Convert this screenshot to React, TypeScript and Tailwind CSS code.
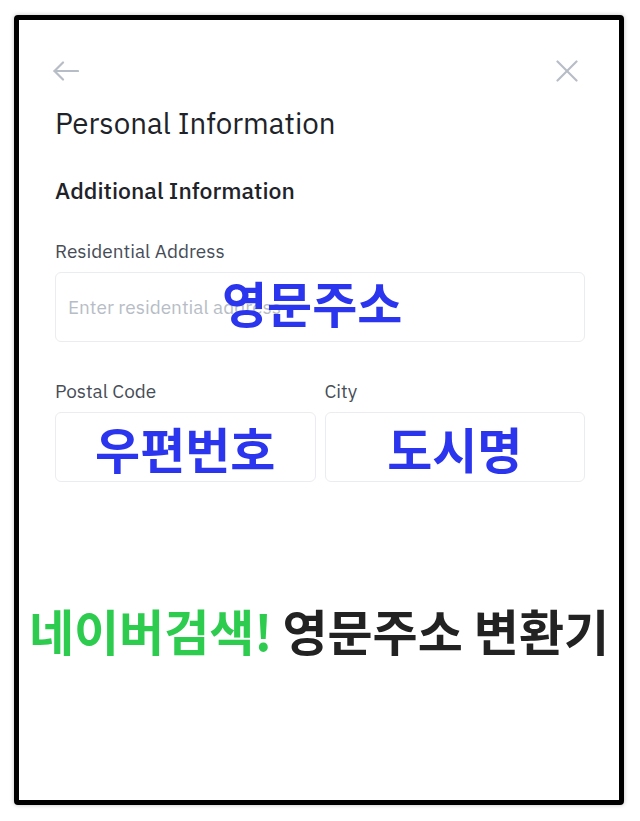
import React from "react";

const sans = { fontFamily: '"IBM Plex Sans", Inter, "Noto Sans", sans-serif' };
const kr = { fontFamily: '"Noto Sans CJK KR", "Noto Sans", sans-serif' };

function ArrowLeft() {
  return (
    <svg width="26" height="22" viewBox="0 0 26 22" fill="none" stroke="#b7bdc6" strokeWidth="2.2" strokeLinecap="round" strokeLinejoin="round">
      <path d="M25 11H1.5" />
      <path d="M10 2.5L1.5 11l8.5 8.5" />
    </svg>
  );
}

function Close() {
  return (
    <svg width="22" height="22" viewBox="0 0 22 22" fill="none" stroke="#b7bdc6" strokeWidth="2.2" strokeLinecap="round">
      <path d="M1.5 1.5l19 19" />
      <path d="M20.5 1.5l-19 19" />
    </svg>
  );
}

export default function App() {
  return (
    <div className="w-[640px] h-[821px] bg-white overflow-hidden pt-[15px] pl-[14px]">
      <div className="w-[610px] h-[790px] border-[5px] border-black rounded-[4px] bg-white shadow-[0_0_4px_rgba(0,0,0,0.25)] flex flex-col">
        <div className="pl-[36px] pr-[34px] pt-[40px] flex flex-col" style={sans}>
          <div className="flex items-center justify-between h-[22px]">
            <div className="-ml-[2px]"><ArrowLeft /></div>
            <div className="mr-[7px]"><Close /></div>
          </div>
          <div className="mt-[23px] text-[29.5px] leading-[36px] text-[#1e2329]">Personal Information</div>
          <div className="mt-[34px] text-[23px] leading-[30px] font-medium text-[#1e2329]">Additional Information</div>
          <div className="mt-[33px] text-[19px] leading-[26px] text-[#474d57]">Residential Address</div>
          <div className="relative mt-[8px] h-[70px] border border-[#eaecef] rounded-[6px] flex items-center px-[12px]">
            <span className="text-[19px] text-[#b7bdc6]">Enter residential address</span>
            <span className="absolute left-[166px] top-[1px] text-[49px] leading-[56px] font-bold text-[#2b35ee]" style={kr}>영문주소</span>
          </div>
          <div className="mt-[36px] grid grid-cols-2 gap-[9px]">
            <div className="flex flex-col">
              <div className="text-[19px] leading-[26px] text-[#474d57]">Postal Code</div>
              <div className="mt-[8px] h-[70px] border border-[#eaecef] rounded-[6px] flex items-center justify-center">
                <span className="text-[49px] leading-[56px] font-bold text-[#2b35ee] mt-[1px]" style={kr}>우편번호</span>
              </div>
            </div>
            <div className="flex flex-col">
              <div className="text-[19px] leading-[26px] text-[#474d57]">City</div>
              <div className="mt-[8px] h-[70px] border border-[#eaecef] rounded-[6px] flex items-center justify-center">
                <span className="text-[49px] leading-[56px] font-bold text-[#2b35ee] mt-[1px]" style={kr}>도시명</span>
              </div>
            </div>
          </div>
        </div>
        <div className="mt-[118px] flex justify-center whitespace-nowrap text-[49px] leading-[60px] font-bold" style={kr}>
          <span className="text-[#2dcc4f]">네이버검색!</span>
          <span className="text-[#222222] ml-[10px]">영문주소 변환기</span>
        </div>
      </div>
    </div>
  );
}
